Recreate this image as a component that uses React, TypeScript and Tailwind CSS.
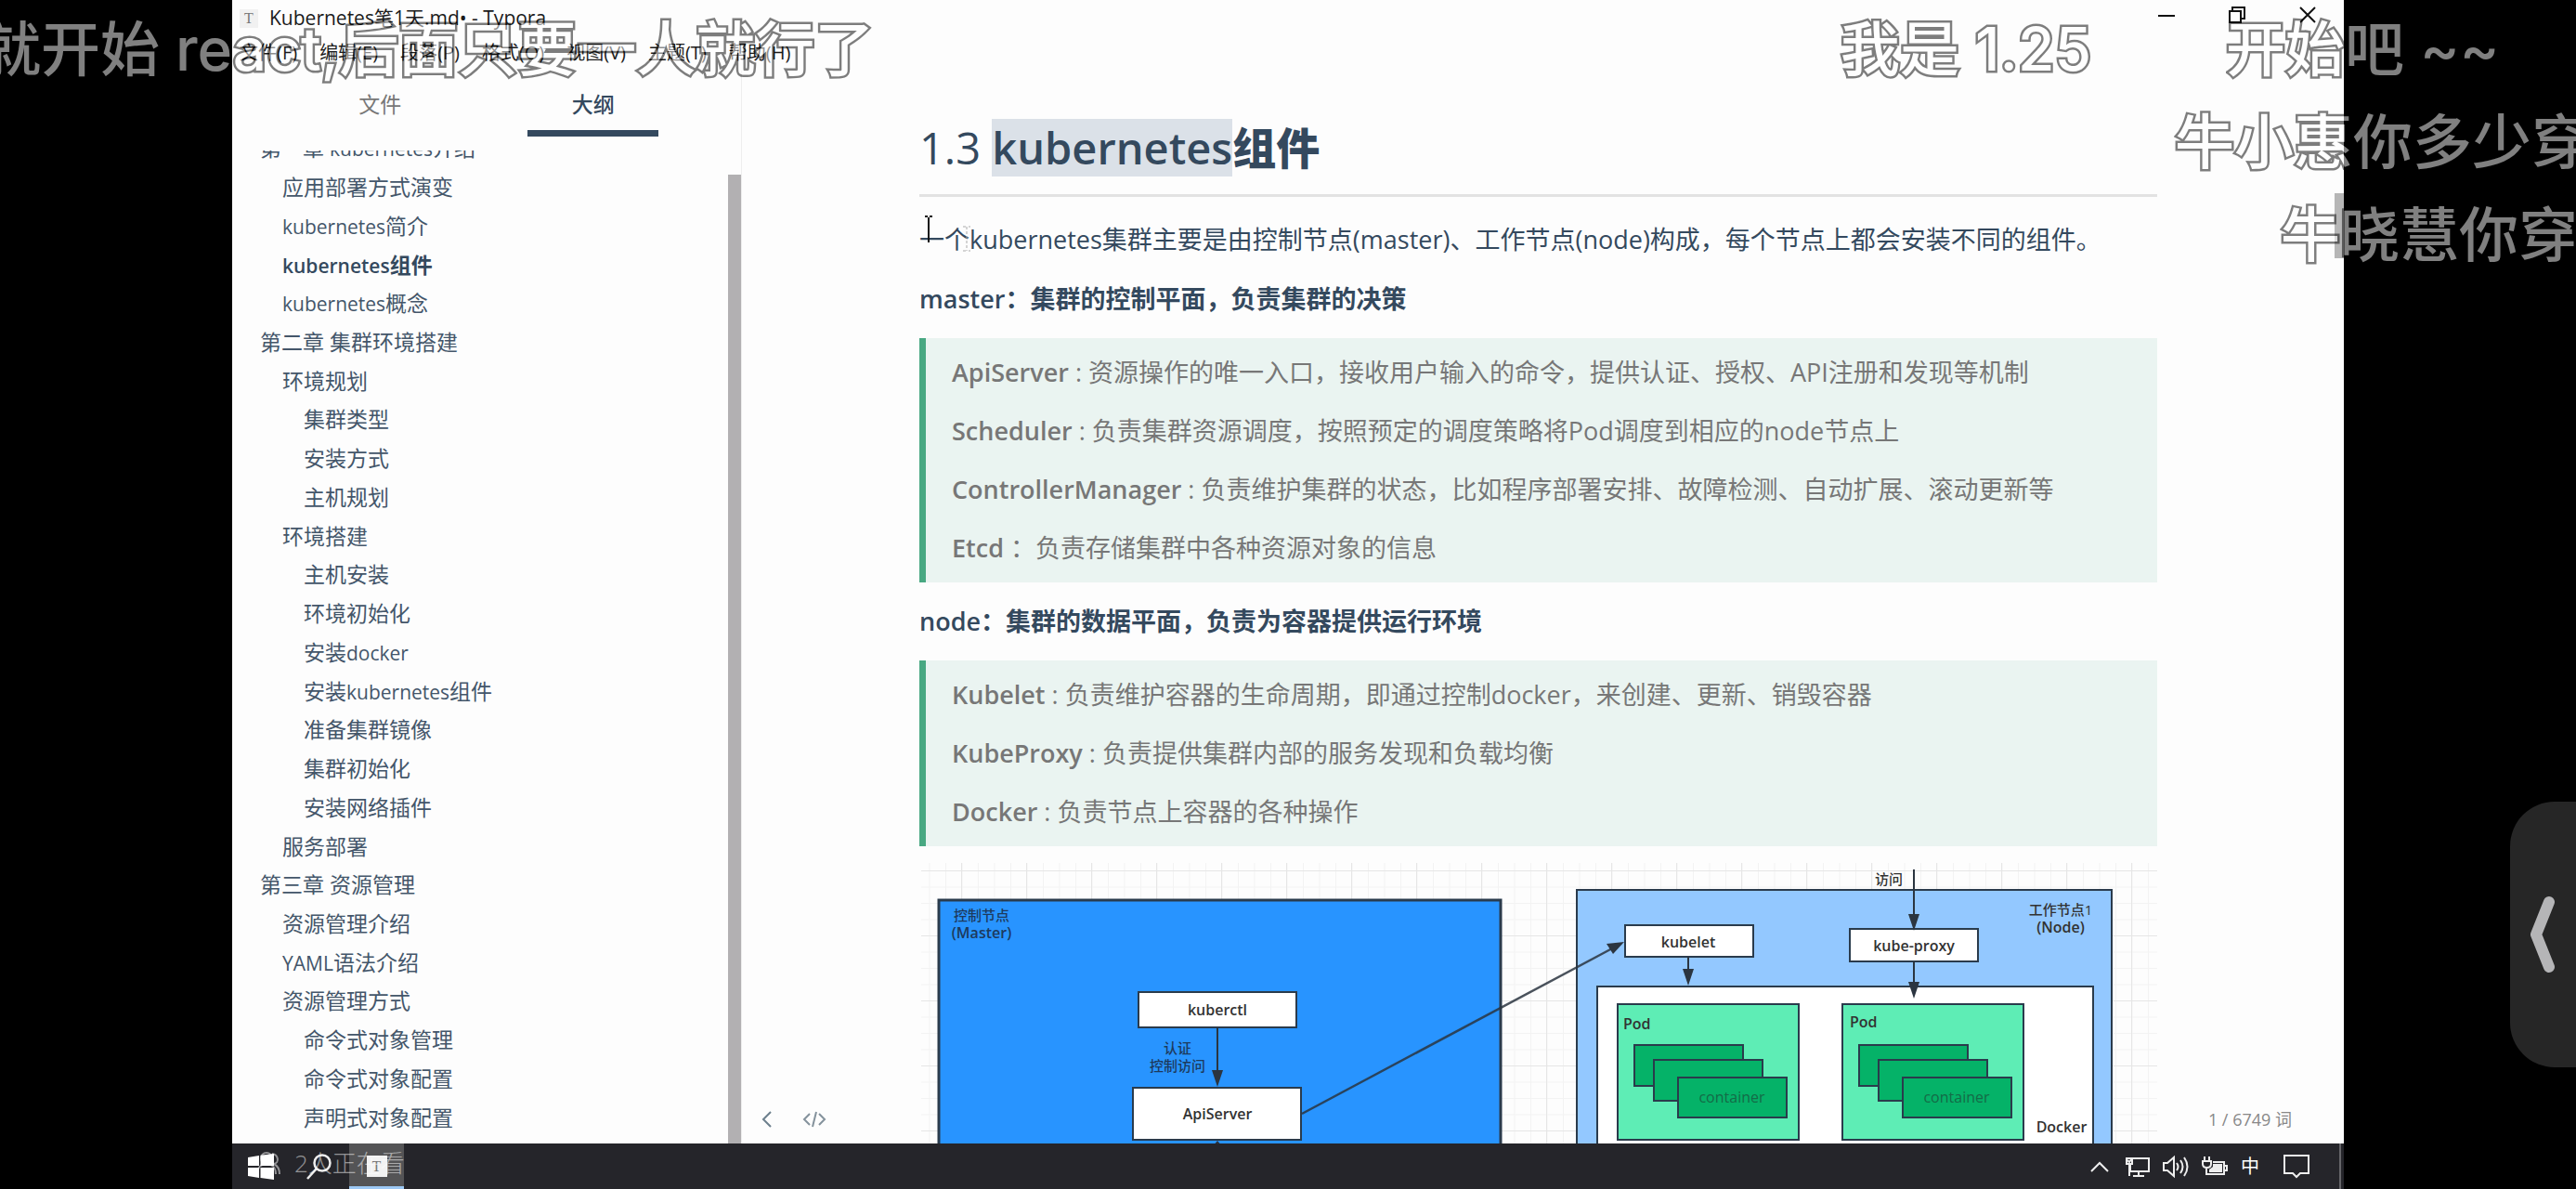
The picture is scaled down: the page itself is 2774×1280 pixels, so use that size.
import React from "react";

type OutlineItem = { level: 1 | 2 | 3; text: string; active?: boolean };

const outline: OutlineItem[] = [
  { level: 1, text: "第一章 kubernetes介绍" },
  { level: 2, text: "应用部署方式演变" },
  { level: 2, text: "kubernetes简介" },
  { level: 2, text: "kubernetes组件", active: true },
  { level: 2, text: "kubernetes概念" },
  { level: 1, text: "第二章 集群环境搭建" },
  { level: 2, text: "环境规划" },
  { level: 3, text: "集群类型" },
  { level: 3, text: "安装方式" },
  { level: 3, text: "主机规划" },
  { level: 2, text: "环境搭建" },
  { level: 3, text: "主机安装" },
  { level: 3, text: "环境初始化" },
  { level: 3, text: "安装docker" },
  { level: 3, text: "安装kubernetes组件" },
  { level: 3, text: "准备集群镜像" },
  { level: 3, text: "集群初始化" },
  { level: 3, text: "安装网络插件" },
  { level: 2, text: "服务部署" },
  { level: 1, text: "第三章 资源管理" },
  { level: 2, text: "资源管理介绍" },
  { level: 2, text: "YAML语法介绍" },
  { level: 2, text: "资源管理方式" },
  { level: 3, text: "命令式对象管理" },
  { level: 3, text: "命令式对象配置" },
  { level: 3, text: "声明式对象配置" },
];

const indent = { 1: "pl-[30px]", 2: "pl-[54px]", 3: "pl-[77px]" };

const menus = ["文件(F)", "编辑(E)", "段落(P)", "格式(O)", "视图(V)", "主题(T)", "帮助(H)"];

function TitleBar() {
  return (
    <header className="h-[76px] shrink-0 text-[#1b1b1b]">
      <div className="flex h-10 items-center text-[21px]">
        <span className="ml-2 mr-3 flex h-5 w-5 items-center justify-center bg-[#f1f1f1] font-['Liberation_Serif',serif] text-[16px] text-[#777]">
          T
        </span>
        <h1>Kubernetes笔1天.md• - Typora</h1>
        <div className="ml-auto mr-[22px] flex gap-[42px] self-start">
          <button aria-label="最小化" className="flex h-8 w-[34px] items-center justify-center">
            <svg width="18" height="18" viewBox="0 0 18 18" fill="none" stroke="#111" strokeWidth="2"><path d="M0 10h18" /></svg>
          </button>
          <button aria-label="还原" className="flex h-8 w-[34px] items-center justify-center">
            <svg width="18" height="18" viewBox="0 0 18 18" fill="none" stroke="#111" strokeWidth="2"><path d="M1 5h12v12H1zM4 5V1h13v12h-4" /></svg>
          </button>
          <button aria-label="关闭" className="flex h-8 w-[34px] items-center justify-center">
            <svg width="18" height="18" viewBox="0 0 18 18" fill="none" stroke="#111" strokeWidth="2"><path d="M1 1l16 16M17 1L1 17" /></svg>
          </button>
        </div>
      </div>
      <nav className="flex gap-6 pl-2 text-[20px] leading-[34px]">
        {menus.map((m) => (
          <button key={m}>{m}</button>
        ))}
      </nav>
    </header>
  );
}

function OutlineText({ text }: { text: string }) {
  return (
    <>
      {text.split(/([A-Za-z]+)/).map((part, i) =>
        i % 2 ? (
          <span key={i} className="text-[21px]">{part}</span>
        ) : (
          part
        )
      )}
    </>
  );
}

function Sidebar() {
  return (
    <aside className="flex w-[549px] shrink-0 flex-col border-r border-[#eee] text-[23px] text-[#44566a]">
      <div className="flex justify-evenly">
        <button className="w-[141px] border-b-[7px] border-transparent pt-2 leading-[56px] text-[#777]">文件</button>
        <button className="w-[141px] border-b-[7px] border-[#34495e] pt-2 font-medium leading-[56px] text-[#34495e]">大纲</button>
      </div>
      <div className="mt-[15px] flex min-h-0 flex-1">
        <nav className="h-full flex-1 overflow-hidden">
          <ul className="-mt-[23px] grid h-[calc(100%+16px)] auto-rows-fr">
            {outline.map((o) => (
              <li key={o.text} className={`flex items-center ${indent[o.level]}`}>
                <a href="#" className={`whitespace-pre leading-none ${o.active ? "font-semibold text-[#34495e]" : ""}`}>
                  <OutlineText text={o.text} />
                </a>
              </li>
            ))}
          </ul>
        </nav>
        <div className="mt-[26px] w-[14px] bg-[#b2b0b2]" />
      </div>
    </aside>
  );
}

function Quote({ items }: { items: [string, string, string][] }) {
  return (
    <blockquote className="flex flex-col gap-[19px] border-l-[7px] border-[#48a882] bg-[#eaf4f1] py-[15px] pl-7 text-[#777]">
      {items.map(([name, sep, text]) => (
        <p key={name} className="whitespace-pre">
          <strong className="font-semibold">{name}</strong>
          {sep}
          {text}
        </p>
      ))}
    </blockquote>
  );
}

function Box(p: { x: number; y: number; w: number; h: number; fill: string; sw?: number }) {
  return <rect x={p.x} y={p.y} width={p.w} height={p.h} fill={p.fill} stroke="#2a3b4c" strokeWidth={p.sw ?? 2} />;
}

function Label(p: { x: number; y: number; children: React.ReactNode; size?: number; fill?: string; weight?: number; anchor?: "start" | "middle" }) {
  return (
    <text x={p.x} y={p.y} fontSize={p.size ?? 16} fill={p.fill ?? "#323232"} fontWeight={p.weight ?? 600} textAnchor={p.anchor ?? "middle"} dominantBaseline="central">
      {p.children}
    </text>
  );
}

function DownArrow({ x, from, to }: { x: number; from: number; to: number }) {
  return (
    <g stroke="#2b3540" fill="#2b3540">
      <path d={`M${x} ${from}V${to - 12}`} strokeWidth="2" />
      <path d={`M${x - 6} ${to - 17}h12l-6 18z`} stroke="none" />
    </g>
  );
}

function Pod({ x, labelX, labelY }: { x: number; labelX: number; labelY: number }) {
  return (
    <g>
      <Box x={x} y={1080} w={195} h={146} fill="#5eedb5" />
      <Label x={labelX} y={labelY} anchor="start">Pod</Label>
      <Box x={x + 18} y={1124} w={117} h={44} fill="#05b268" />
      <Box x={x + 39} y={1140} w={117} h={44} fill="#05b268" />
      <Box x={x + 65} y={1159} w={117} h={43} fill="#05b268" />
      <Label x={x + 123} y={1180} weight={400} fill="#146b47">container</Label>
    </g>
  );
}

function Diagram() {
  return (
    <svg viewBox="990 928 1333 480" className="w-full shrink-0" role="img" aria-label="kubernetes 架构图">
      <defs>
        <pattern id="minor" x="1018" y="936" width="17.5" height="17.5" patternUnits="userSpaceOnUse">
          <path d="M0 .5h17.5M.5 0v17.5" stroke="#f3f3f3" />
        </pattern>
        <pattern id="major" x="1035" y="936" width="70" height="70" patternUnits="userSpaceOnUse">
          <path d="M0 .5h70M.5 0v70" stroke="#e6e6e6" />
        </pattern>
      </defs>
      <rect x="992" y="928" width="1331" height="480" fill="url(#minor)" />
      <rect x="992" y="928" width="1331" height="480" fill="url(#major)" />

      <Box x={1011} y={968} w={605} h={460} fill="#2894ff" sw={3} />
      <Label x={1057} y={984} size={15} fill="#1d3a5c" weight={500}>控制节点</Label>
      <Label x={1057} y={1003} fill="#1d3a5c">(Master)</Label>
      <Box x={1226} y={1067} w={170} h={38} fill="#fff" />
      <Label x={1311} y={1086}>kuberctl</Label>
      <Label x={1268} y={1127} size={15} fill="#1d3a5c" weight={500}>认证</Label>
      <Label x={1268} y={1146} size={15} fill="#1d3a5c" weight={500}>控制访问</Label>
      <DownArrow x={1311} from={1105} to={1168} />
      <Box x={1220} y={1170} w={181} h={56} fill="#fff" />
      <Label x={1311} y={1198}>ApiServer</Label>
      <path d="M1311 1227l-10 12h20z" fill="#2b3540" />

      <Box x={1698} y={957} w={576} h={460} fill="#93c8ff" />
      <Label x={2219} y={978} size={15} weight={500}>工作节点1</Label>
      <Label x={2219} y={997}>(Node)</Label>
      <Box x={1720} y={1061} w={534} h={360} fill="#fff" />
      <Box x={1750} y={995} w={138} h={34} fill="#fff" />
      <Label x={1818} y={1013}>kubelet</Label>
      <Box x={1992} y={999} w={138} h={35} fill="#fff" />
      <Label x={2061} y={1017}>kube-proxy</Label>
      <Label x={2034} y={945} size={15} weight={500}>访问</Label>
      <DownArrow x={2061} from={935} to={1000} />
      <DownArrow x={2061} from={1034} to={1073} />
      <DownArrow x={1818} from={1029} to={1059} />
      <Pod x={1742} labelX={1748} labelY={1101} />
      <Pod x={1984} labelX={1992} labelY={1099} />
      <Label x={2220} y={1212}>Docker</Label>

      <path d="M1402 1198L1738 1019" stroke="#2b3540" strokeWidth="2.5" opacity=".85" />
      <path d="M1749 1013l-12 13-7-11z" fill="#2b3540" />
    </svg>
  );
}

function Editor() {
  return (
    <main className="relative flex min-w-0 flex-1 flex-col overflow-hidden pl-[191px] pr-[201px] pt-[52px] text-[#34495e]">
      <h2 className="mb-6 border-b-[3px] border-[#e2e2e2] pb-[19px] text-[47px] font-semibold leading-[62px]">
        <span className="font-medium">1.3 </span>
        <mark className="inline-block bg-[#dbe1e8] text-inherit">kubernetes</mark>
        <b>组件</b>
      </h2>
      <div className="flex flex-col gap-5 text-[27px] leading-[44px]">
        <p className="relative whitespace-nowrap">
          一个kubernetes集群主要是由控制节点(master)、工作节点(node)构成，每个节点上都会安装不同的组件。
          <svg className="absolute left-[5px] -top-1" width="50" height="40" viewBox="0 0 50 40" fill="none" aria-hidden="true">
            <path d="M1 1h3M6 1h3M5 2v27" stroke="#111" strokeWidth="2" />
            <path d="M42 12h3M48 12h2M46 12v26M42 38h3M48 38h2" stroke="#aaa" strokeDasharray="3 2" />
          </svg>
        </p>
        <p className="font-semibold">master：集群的控制平面，负责集群的决策</p>
        <Quote
          items={[
            ["ApiServer", " : ", "资源操作的唯一入口，接收用户输入的命令，提供认证、授权、API注册和发现等机制"],
            ["Scheduler", " : ", "负责集群资源调度，按照预定的调度策略将Pod调度到相应的node节点上"],
            ["ControllerManager", " : ", "负责维护集群的状态，比如程序部署安排、故障检测、自动扩展、滚动更新等"],
            ["Etcd", " ：", "负责存储集群中各种资源对象的信息"],
          ]}
        />
        <p className="font-semibold">node：集群的数据平面，负责为容器提供运行环境</p>
        <Quote
          items={[
            ["Kubelet", " : ", "负责维护容器的生命周期，即通过控制docker，来创建、更新、销毁容器"],
            ["KubeProxy", " : ", "负责提供集群内部的服务发现和负载均衡"],
            ["Docker", " : ", "负责节点上容器的各种操作"],
          ]}
        />
      </div>
      <div className="mt-[18px]">
        <Diagram />
      </div>
      <div className="absolute bottom-0 left-0 right-0 flex h-[52px] items-center pl-[21px] pr-14 text-[18px] text-[#888]">
        <button aria-label="隐藏侧边栏">
          <svg width="12" height="18" viewBox="0 0 12 18" fill="none" stroke="#6c7f8c" strokeWidth="2"><path d="M10 1L2 9l8 8" /></svg>
        </button>
        <button aria-label="源代码模式" className="ml-8">
          <svg width="26" height="18" viewBox="0 0 26 18" fill="none" stroke="#84929c" strokeWidth="2"><path d="M8 3L2 9l6 6M18 3l6 6-6 6M15 1l-4 16" /></svg>
        </button>
        <span className="ml-auto">1 / 6749 词</span>
      </div>
      <div className="absolute right-0 top-[132px] h-[70px] w-[10px] bg-[#b6b6b6]" />
    </main>
  );
}

function Taskbar() {
  return (
    <footer className="relative flex h-[49px] shrink-0 items-stretch bg-[#25252a] text-white">
      <button aria-label="开始" className="flex w-[61px] items-center justify-center">
        <svg width="28" height="28" viewBox="0 0 28 28" fill="#fff"><path d="M0 4l12-2v11H0zM13.500 1.800L28 0v13H13.500zM0 15h12v11L0 24zM13.500 15H28v13l-14.500-2z" /></svg>
      </button>
      <button aria-label="搜索" className="flex w-[65px] items-center justify-center">
        <svg width="28" height="28" viewBox="0 0 28 28" fill="none" stroke="#eee" strokeWidth="2.500"><circle cx="17" cy="10" r="8.500" /><path d="M11 16L1 27" /></svg>
      </button>
      <button aria-label="Typora" className="flex w-[59px] items-center justify-center border-b-[3px] border-[#9cc8f5] bg-[#545456] pt-[3px]">
        <span className="flex h-[23px] w-[22px] items-center justify-center bg-[#f2f2f2] font-['Liberation_Serif',serif] text-[16px] text-[#777]">T</span>
      </button>
      <div className="absolute left-[26px] top-[5px] flex items-center gap-[15px] text-[26px] font-light leading-8 text-white/50">
        <svg width="26" height="26" viewBox="0 0 26 26" fill="none" stroke="currentColor" strokeWidth="2" aria-hidden="true">
          <circle cx="11" cy="8" r="6" /><path d="M1 25c0-7 4-11 10-11s10 4 10 11M17 3c7 1 8 10 2 11 4 2 6 6 6 11" />
        </svg>
        <span>2人正在看</span>
      </div>
      <div className="ml-auto flex items-center gap-[14px] border-r-2 border-[#66666a] pr-8">
        <button aria-label="显示隐藏的图标" className="mr-1">
          <svg width="20" height="26" viewBox="0 0 20 26" fill="none" stroke="#eee" strokeWidth="2"><path d="M1 18l9-9 9 9" /></svg>
        </button>
        <button aria-label="网络">
          <svg width="26" height="26" viewBox="0 0 26 26" fill="none" stroke="#eee" strokeWidth="2"><path d="M8 4h17v14H5v-7M14 18v5M8 23h12M1 4h6v6H1zM4 10v13M2 6l2 2 3-4" /></svg>
        </button>
        <button aria-label="音量">
          <svg width="28" height="26" viewBox="0 0 28 26" fill="none" stroke="#eee" strokeWidth="2"><path d="M1 9h4l7-6v20l-7-6H1zM15 9q3 4 0 8M19 6q5 7 0 14M23 3q7 10 0 20" /></svg>
        </button>
        <button aria-label="电源">
          <svg width="28" height="26" viewBox="0 0 28 26" fill="none" stroke="#eee" strokeWidth="2"><path d="M3 2v5M8 2v5M1 7h9v3q0 4-4.500 4T1 10zM5 14v7h19V8H12M24 12h3v5h-3" /><path d="M12 10h10v9H8v-3l4-3z" fill="#eee" stroke="none" /></svg>
        </button>
        <button aria-label="输入法" className="text-[20px] leading-none">中</button>
        <button aria-label="通知" className="ml-3">
          <svg width="28" height="28" viewBox="0 0 28 28" fill="none" stroke="#eee" strokeWidth="2"><path d="M1 2h26v19h-9l-4 4-4-4H1z" /></svg>
        </button>
      </div>
      <div className="w-[3px]" />
    </footer>
  );
}

function Comment({ className, children }: { className: string; children: React.ReactNode }) {
  return (
    <p className={`absolute whitespace-pre text-[64px] font-medium leading-[106px] text-white opacity-50 [-webkit-text-stroke:5px_#000] [paint-order:stroke_fill] font-['Inter','Noto_Sans_CJK_SC',sans-serif] ${className}`}>
      {children}
    </p>
  );
}

export default function App() {
  return (
    <div className="relative flex h-screen overflow-hidden bg-black px-[250px] font-['Open_Sans','Noto_Sans_CJK_SC',sans-serif]">
      <div className="flex min-w-0 flex-1 flex-col bg-[#fdfdfd]">
        <TitleBar />
        <div className="flex min-h-0 flex-1">
          <Sidebar />
          <Editor />
        </div>
        <Taskbar />
      </div>

      <Comment className="-left-5 top-0">就开始 react,后面只要一人就行了</Comment>
      <Comment className="left-[1982px] top-0">我是 1.25</Comment>
      <Comment className="left-[2397px] top-0">开始吧 ~~</Comment>
      <Comment className="left-[2342px] top-[100px]">牛小惠你多少穿</Comment>
      <Comment className="left-[2456px] top-[200px]">牛晓慧你穿</Comment>

      <button aria-label="展开" className="absolute right-0 top-[863px] flex h-[286px] w-[71px] items-center rounded-l-[48px] bg-[#262626] pl-[22px]">
        <svg width="28" height="84" viewBox="0 0 28 84" fill="none" stroke="#b5b5b7" strokeWidth="12" strokeLinecap="round" strokeLinejoin="round"><path d="M20 7L6 42l14 35" /></svg>
      </button>
    </div>
  );
}
